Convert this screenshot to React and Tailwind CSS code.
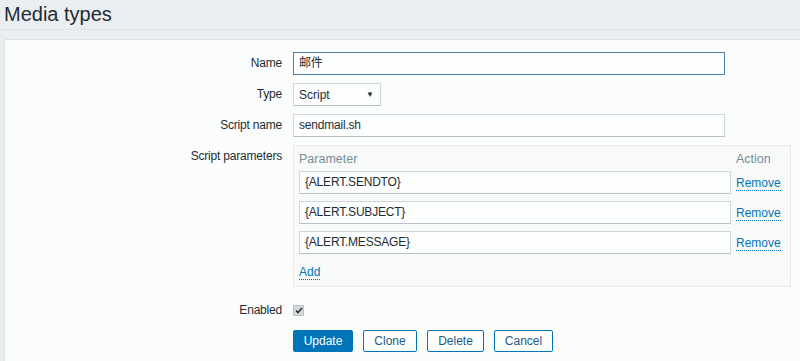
import { useState } from "react";

const font = { fontFamily: '"Liberation Sans", Arial, "Noto Sans CJK SC", sans-serif' };

function Row({ label, children, className = "" }) {
  return (
    <div className={`flex items-start ${className}`}>
      <div className="w-[288px] pr-[11px] text-right text-[12px] leading-[22px] text-[#1f2c33] tracking-[-0.2px]">
        {label}
      </div>
      <div className="flex-1">{children}</div>
    </div>
  );
}

function TextInput({ value, focused, width = "w-[432px]" }) {
  return (
    <div
      className={`${width} h-[23px] px-[5px] text-[12px] leading-[21px] text-[#1f2c33] bg-[#fdfefe] border tracking-[-0.2px] ${
        focused ? "border-[#4f7ea8]" : "border-[#d0d6d9] border-b-[#b8c0c4]"
      }`}
    >
      {value}
    </div>
  );
}

function LinkText({ children }) {
  return (
    <span className="text-[12px] text-[#0275b8] border-b border-dotted border-[#0275b8] leading-[13px]">
      {children}
    </span>
  );
}

export default function App() {
  const [params] = useState(["{ALERT.SENDTO}", "{ALERT.SUBJECT}", "{ALERT.MESSAGE}"]);

  return (
    <div className="h-[361px] overflow-hidden bg-[#ebeef0]" style={font}>
      {/* Header */}
      <div className="h-[30px] border-b border-[#e0e4e6] px-[4px] pt-[2px]">
        <h1 className="text-[20px] leading-[24px] text-[#1f2c33]">Media types</h1>
      </div>

      <div className="mt-[9px] ml-[4px] border-l border-t border-[#dde2e5] bg-[#fbfcfc] pt-[12px] h-[400px]">
        <Row label="Name">
          <TextInput value="邮件" focused />
        </Row>

        <Row label="Type" className="mt-[8px]">
          <div className="w-[88px] h-[23px] pl-[5px] pr-[6px] flex items-center justify-between text-[12px] text-[#1f2c33] bg-[#fdfefe] border border-[#d0d6d9] border-b-[#b8c0c4]">
            <span>Script</span>
            <span className="text-[8px] text-[#1f2c33]">▼</span>
          </div>
        </Row>

        <Row label="Script name" className="mt-[8px]">
          <TextInput value="sendmail.sh" />
        </Row>

        <Row label="Script parameters" className="mt-[8px]">
          <div className="w-[498px] h-[142px] border border-[#e4e8ea] bg-[#f8faf9] px-[5px] pt-[6px]">
            <div className="flex text-[12.5px] text-[#768d99] leading-[14px]">
              <div className="w-[437px]">Parameter</div>
              <div>Action</div>
            </div>
            <div className="mt-[5px] flex flex-col gap-[7px]">
              {params.map((p) => (
                <div key={p} className="flex items-center">
                  <TextInput value={p} width="w-[432px]" />
                  <div className="ml-[5px] text-[12px] leading-[14px]">
                    <LinkText>Remove</LinkText>
                  </div>
                </div>
              ))}
            </div>
            <div className="mt-[11px] text-[12px] leading-[14px]">
              <LinkText>Add</LinkText>
            </div>
          </div>
        </Row>

        <Row label="Enabled" className="mt-[12px]">
          <div className="h-[22px] flex items-center">
            <div className="w-[11px] h-[11px] rounded-[1px] bg-[#d5d9db] border border-[#b9bfc2] flex items-center justify-center">
              <svg width="8" height="7" viewBox="0 0 8 7">
                <path d="M1 3.5 L3 5.5 L7 1" fill="none" stroke="#2a3338" strokeWidth="1.6" />
              </svg>
            </div>
          </div>
        </Row>

        <div className="flex ml-[288px] mt-[9px] gap-[10px] text-[12px]">
          <button className="w-[60px] h-[22px] bg-[#0275b8] border border-[#0275b8] text-white rounded-[2px]">
            Update
          </button>
          <button className="w-[54px] h-[22px] bg-white border border-[#0275b8] text-[#1d5a86] rounded-[2px]">
            Clone
          </button>
          <button className="w-[57px] h-[22px] bg-white border border-[#0275b8] text-[#1d5a86] rounded-[2px]">
            Delete
          </button>
          <button className="w-[59px] h-[22px] bg-white border border-[#0275b8] text-[#1d5a86] rounded-[2px]">
            Cancel
          </button>
        </div>
      </div>
    </div>
  );
}
